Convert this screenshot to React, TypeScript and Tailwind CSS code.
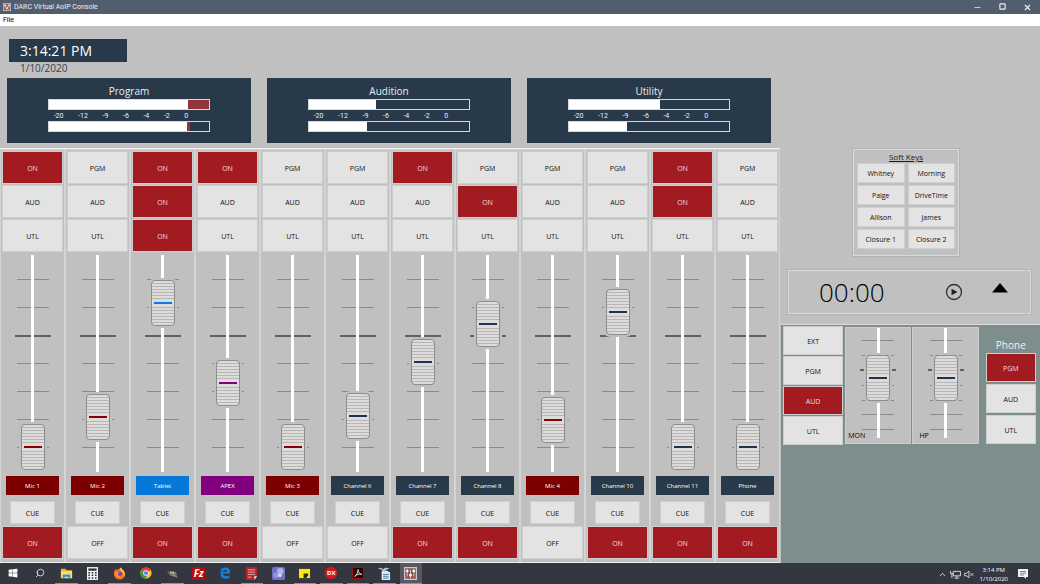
import { useState } from "react";
import type { ReactNode } from "react";
import clsx from "clsx";
import { FaWindows } from "react-icons/fa";
import { ChevronUp, Minus, Search, Square, X } from "lucide-react";

type Bus = "PGM" | "AUD" | "UTL";

interface ChannelConfig {
  name: string;
  kind: "mic" | "tablet" | "apex" | "line";
  buses: Bus[];
  level: number;
  on: boolean;
}

const BUSES: Bus[] = ["PGM", "AUD", "UTL"];

const CHANNELS: ChannelConfig[] = [
  { name: "Mic 1", kind: "mic", buses: ["PGM"], level: 0, on: true },
  { name: "Mic 2", kind: "mic", buses: [], level: 30, on: false },
  { name: "Tablet", kind: "tablet", buses: ["PGM", "AUD", "UTL"], level: 144, on: true },
  { name: "APEX", kind: "apex", buses: ["PGM"], level: 64, on: true },
  { name: "Mic 3", kind: "mic", buses: [], level: 0, on: false },
  { name: "Channel 6", kind: "line", buses: [], level: 31, on: false },
  { name: "Channel 7", kind: "line", buses: ["PGM"], level: 85, on: true },
  { name: "Channel 8", kind: "line", buses: ["AUD"], level: 123, on: true },
  { name: "Mic 4", kind: "mic", buses: [], level: 27, on: false },
  { name: "Channel 10", kind: "line", buses: [], level: 135, on: true },
  { name: "Channel 11", kind: "line", buses: ["PGM", "AUD"], level: 0, on: true },
  { name: "Phone", kind: "line", buses: [], level: 0, on: true },
];

const METERS = [
  { name: "Program", levels: [{ white: 87, red: 13 }, { white: 86, red: 2 }] },
  { name: "Audition", levels: [{ white: 42, red: 0 }, { white: 36, red: 0 }] },
  { name: "Utility", levels: [{ white: 57, red: 0 }, { white: 36, red: 0 }] },
];

const SOFT_KEYS = ["Whitney", "Morning", "Paige", "DriveTime", "Allison", "James", "Closure 1", "Closure 2"];

const labelColor = {
  mic: "bg-[#7d0000]",
  tablet: "bg-[#0578d8]",
  apex: "bg-[#800080]",
  line: "bg-[#28394a]",
};

const capColor = {
  mic: "[--cap:#8b0000]",
  tablet: "[--cap:#0a78e6]",
  apex: "[--cap:#800080]",
  line: "[--cap:#1f3350]",
};

function Key({ on, className, children, onClick }: { on?: boolean; className?: string; children: ReactNode; onClick?: () => void }) {
  return (
    <button
      type="button"
      onClick={onClick}
      className={clsx(
        "flex items-center justify-center pt-px font-medium outline outline-[#cecece]",
        on ? "bg-[#a21b21] text-[#f4dede]" : "bg-[#e3e3e3] text-[#111111]",
        className
      )}
    >
      {children}
    </button>
  );
}

function Fader({ name, value, max, cap, small }: { name: string; value: number; max: number; cap: string; small?: boolean }) {
  const [level, setLevel] = useState(value);

  return (
    <div className={clsx("grid w-full justify-items-center", small ? "h-[110px]" : "h-[217px]")}>
      <div className={clsx("flex h-full w-9 flex-col items-center justify-between [grid-area:1/1]", small ? "pt-3 pb-2" : "py-6")}>
        {[0, 1, 2, 3, 4, 5, 6].map((i) => (
          <span key={i} className={i === 2 ? "h-[2px] w-9 bg-[#636363]" : "h-px w-8 bg-[#8a8a8a]"} />
        ))}
      </div>
      <div className="h-full w-[3px] bg-white [grid-area:1/1]" />
      <input
        type="range"
        aria-label={name}
        min={0}
        max={max}
        value={level}
        onChange={(e) => setLevel(Number(e.target.value))}
        className={clsx(
          cap,
          small ? "h-full" : "h-[215px]",
          "w-6 appearance-none bg-transparent [grid-area:1/1] [writing-mode:vertical-lr] [direction:rtl]",
          "[&::-webkit-slider-thumb]:h-[46px] [&::-webkit-slider-thumb]:w-6 [&::-webkit-slider-thumb]:appearance-none",
          "[&::-webkit-slider-thumb]:rounded-[4px] [&::-webkit-slider-thumb]:border [&::-webkit-slider-thumb]:border-[#8e8e8e]",
          "[&::-webkit-slider-thumb]:shadow-[0_0_0_2px_#bfbfbf]",
          "[&::-webkit-slider-thumb]:[background:linear-gradient(var(--cap),var(--cap))_center/18px_2px_no-repeat,linear-gradient(#dcdcdc,#dcdcdc)_center/100%_6px_no-repeat,repeating-linear-gradient(#dedcda_0_2px,#b8b6b4_2px_3px)]"
        )}
      />
    </div>
  );
}

function Channel({ config }: { config: ChannelConfig }) {
  const [buses, setBuses] = useState(config.buses);
  const [on, setOn] = useState(config.on);

  const toggleBus = (bus: Bus) => {
    setBuses(buses.includes(bus) ? buses.filter((b) => b !== bus) : [...buses, bus]);
  };

  return (
    <div className="flex flex-col border-x border-t border-[#d4d4d4] px-[2px] pt-[2px] pb-[4px]">
      <div className="flex flex-col gap-[3px]">
        {BUSES.map((bus) => (
          <Key key={bus} on={buses.includes(bus)} onClick={() => toggleBus(bus)} className="h-[31px]">
            {buses.includes(bus) ? "ON" : bus}
          </Key>
        ))}
      </div>
      <div className="mt-1">
        <Fader name={config.name + " level"} value={config.level} max={169} cap={capColor[config.kind]} />
      </div>
      <div className={clsx("mx-[3px] mt-1 flex h-[19px] items-center justify-center text-[6px] text-white", labelColor[config.kind])}>
        {config.name}
      </div>
      <Key className="mx-2 mt-[7px] h-[21px]">CUE</Key>
      <Key on={on} onClick={() => setOn(!on)} className="mt-1 h-[31px]">
        {on ? "ON" : "OFF"}
      </Key>
    </div>
  );
}

function MeterBar({ name, white, red }: { name: string; white: number; red: number }) {
  return (
    <div role="meter" aria-label={name} aria-valuenow={white + red} className="flex h-[11px] border border-[#d5d9dc]">
      <div className="bg-white" style={{ width: white + "%" }} />
      <div className="bg-[#91343b]" style={{ width: red + "%" }} />
    </div>
  );
}

function MeterPanel({ name, levels }: { name: string; levels: { white: number; red: number }[] }) {
  return (
    <section className="h-[65px] bg-[#28394a] pt-[5px] text-[#eceff1]">
      <h2 className="text-center text-[10px] leading-4">{name}</h2>
      <div className="mx-auto w-2/3">
        <MeterBar name={name + " left"} {...levels[0]} />
        <div className="flex h-[11px] items-center justify-between pt-px pr-[22px] pl-[6px] font-[Roboto,sans-serif] text-[7px]">
          {["-20", "-12", "-9", "-6", "-4", "-2", "0"].map((db) => (
            <span key={db}>{db}</span>
          ))}
        </div>
        <MeterBar name={name + " right"} {...levels[1]} />
      </div>
    </section>
  );
}

function ConsoleIcon({ className }: { className?: string }) {
  return (
    <svg viewBox="0 0 16 16" className={className}>
      <rect width="16" height="16" fill="#d9c4c4" />
      <rect x="1.500" y="1.500" width="13" height="13" fill="#7d5656" />
      <path d="M4 2v12M8 2v12M12 2v12" stroke="#e8e0e0" strokeWidth="1" />
      <path d="M2.500 5h3M6.500 10h3M10.500 5h3" stroke="#fff" strokeWidth="2.600" />
      <path d="M2.500 12.500h3M10.500 12.500h3M6.500 3h3" stroke="#d04545" strokeWidth="2" />
    </svg>
  );
}

const apps: { name: string; open?: boolean; icon: ReactNode }[] = [
  { name: "Start", icon: <FaWindows className="size-[10px] text-white" /> },
  { name: "Search", icon: <Search className="size-[10px] -scale-x-100 text-[#e6e6e6]" strokeWidth={2} /> },
  {
    name: "Explorer",
    open: true,
    icon: (
      <svg viewBox="0 0 14 14" className="size-[13px]">
        <path d="M1 2h5l1 1.5h6V12H1z" fill="#f0b429" />
        <path d="M1 4.5h12V12H1z" fill="#fbdc78" />
        <path d="M3 8h8v4.5H9.2v-2H4.8v2H3z" fill="#2f8fd8" />
      </svg>
    ),
  },
  {
    name: "Calculator",
    icon: (
      <svg viewBox="0 0 12 14" className="h-[13px] w-[11px]">
        <rect width="12" height="14" fill="#f5f5f5" />
        <rect x="1.5" y="1.5" width="9" height="2.5" fill="#30333b" />
        <path d="M1.5 6.2h9M1.5 9h9M1.5 11.8h9" stroke="#30333b" strokeWidth="1.6" strokeDasharray="1.8 1.8" />
      </svg>
    ),
  },
  {
    name: "Firefox",
    open: true,
    icon: (
      <svg viewBox="0 0 16 16" className="size-[13px]">
        <path d="M2 4 3.5 2l1 1.8C6 2 8 3 9 .5c2 1.3 2.5 3 4 4 3.500 4 1 11-5 11S-.5 9 2 4z" fill="#ff6a2b" />
        <path d="M9 .5c2 1.300 2.500 3 4 4 2 2.500 2 6 .5 8C14 8 11 5 9 4z" fill="#ffd43b" />
        <circle cx="7.800" cy="8.800" r="3.400" fill="#7542c9" />
        <path d="M3 7c2-1.500 4-.5 5 .5-1.500 0-2.500 1-2 2.200 1 1.500 3.500 1.300 5 0-.5 3-6 4-8 .3z" fill="#ff9a28" />
      </svg>
    ),
  },
  {
    name: "Chrome",
    icon: (
      <svg viewBox="0 0 16 16" className="size-[12px]">
        <circle cx="8" cy="8" r="7.500" fill="#fbc116" />
        <path d="M8 8 1.500 4.300A7.500 7.500 0 0 1 14.500 4.300z" fill="#e33b2e" />
        <path d="M8 8 1.500 4.300A7.500 7.500 0 0 0 7.500 15.500l3.200-6z" fill="#2ba24c" />
        <circle cx="8" cy="8" r="3.700" fill="#fff" />
        <circle cx="8" cy="8" r="2.800" fill="#4285f4" />
      </svg>
    ),
  },
  {
    name: "GIMP",
    open: true,
    icon: (
      <svg viewBox="0 0 16 12" className="h-[9px] w-[12px]">
        <path d="M1 2l4 2 3-1 5 1 2 4-4 2-5-1-3-3z" fill="#80776b" />
        <circle cx="6" cy="4.500" r="1.200" fill="#ccc" />
        <circle cx="9.500" cy="5" r="1.200" fill="#ddd" />
        <path d="M9 8l6 3" stroke="#d08132" strokeWidth="1.500" />
        <path d="M1 2l5 5" stroke="#37312b" strokeWidth="1" />
      </svg>
    ),
  },
  {
    name: "FileZilla",
    icon: <span className="flex size-[13px] items-center justify-center bg-[#b50d0d] text-[10px] font-bold text-white italic">Fz</span>,
  },
  {
    name: "Edge",
    icon: (
      <svg viewBox="0 0 16 16" className="size-[12px]">
        <path d="M1 7C2 2.500 5 .7 8.300.7c4.500 0 6.900 3 6.700 8.100H5.300c.2 3.800 5.200 4.400 8.600 2.500v3.100C8.500 17 2 14.900 2 9.500c0-2 1.200-3.700 3.400-4.700C3.500 5 2 6 1 7zm4.500-.7h5.300C10.600 3 6 3 5.500 6.300z" fill="#1282dd" />
      </svg>
    ),
  },
  {
    name: "Log",
    open: true,
    icon: (
      <svg viewBox="0 0 14 14" className="size-[13px]">
        <path d="M1 0h12v10l-3 4H1z" fill="#b3222c" />
        <path d="M3 3h8M3 5.500h8M3 8h8M3 11h4" stroke="#e8b3b5" strokeWidth="1" />
        <path d="M13 10h-3v4z" fill="#eee" />
      </svg>
    ),
  },
  {
    name: "Audio",
    icon: (
      <svg viewBox="0 0 14 14" className="size-[13px]">
        <rect width="14" height="14" rx="2" fill="#6f70c9" />
        <circle cx="9" cy="4.500" r="3.500" fill="#aeb4ec" />
        <circle cx="4.500" cy="9" r="3" fill="#9298dc" />
        <circle cx="8.500" cy="9" r="2" fill="#d9dcfa" />
      </svg>
    ),
  },
  {
    name: "Notes",
    open: true,
    icon: (
      <svg viewBox="0 0 12 12" className="size-[11px]">
        <path d="M0 1h12v10H0z" fill="#fce903" />
        <path d="M5 11V6h5v2L8 11z" fill="#2c2d31" />
      </svg>
    ),
  },
  {
    name: "DX",
    open: true,
    icon: <span className="flex size-[12px] items-center justify-center rounded-full bg-[#e2131c] text-[6px] font-bold text-white">DX</span>,
  },
  {
    name: "Acrobat",
    open: true,
    icon: (
      <svg viewBox="0 0 14 14" className="size-[12px]">
        <rect x=".5" y=".5" width="13" height="13" fill="#2a0504" stroke="#a01612" />
        <path d="M3 11c2-1 4-4 4-8 .5 4 2 5.500 4.500 5.500-3-.7-6 .3-8.500 2.500z" fill="none" stroke="#f0e8e8" strokeWidth="1" />
      </svg>
    ),
  },
  {
    name: "Writer",
    open: true,
    icon: (
      <svg viewBox="0 0 14 14" className="size-[13px]">
        <path d="M4 4h6l3 2v8H4z" fill="#e4eef4" />
        <path d="M5.500 8h6M5.500 10h6M5.500 12h6" stroke="#3f7796" strokeWidth="1" />
        <path d="M0 1.500c2-1.500 4-.5 5.500 1C8 .5 10 .5 12.500 2 9.500 2 8 3.500 7 6 5.500 3.500 3 2 0 1.500z" fill="#a9c9d8" />
      </svg>
    ),
  },
  { name: "DARC", open: true, icon: <ConsoleIcon className="size-[13px]" /> },
];

export default function App() {
  const [monitor, setMonitor] = useState("AUD");
  const [phone, setPhone] = useState<Bus>("PGM");

  return (
    <div className="flex min-h-screen flex-col bg-[#c0c0c0] font-['Open_Sans','Noto_Sans',sans-serif] text-[7px] leading-none">
      <header className="flex h-[14px] items-center justify-between bg-[#525e6e] text-[#eef0f2]">
        <div className="flex items-center gap-[3px] pl-[3px]">
          <ConsoleIcon className="size-2" />
          <h1 className="font-[Roboto,sans-serif] text-[7px]">DARC Virtual AoIP Console</h1>
        </div>
        <div className="flex">
          <button type="button" aria-label="Minimize" className="flex w-[25px] justify-center"><Minus className="size-[9px]" /></button>
          <button type="button" aria-label="Maximize" className="flex w-[25px] justify-center"><Square className="size-[7px]" strokeWidth={4} /></button>
          <button type="button" aria-label="Close" className="flex w-[25px] justify-center"><X className="size-[9px]" strokeWidth={3} /></button>
        </div>
      </header>
      <nav className="flex h-3 items-center bg-white pl-[3px]">
        <button type="button" className="font-[Roboto,sans-serif] text-[7px] text-black">File</button>
      </nav>

      <main className="flex flex-1">
        <div className="flex flex-[3] flex-col">
          <div className="h-[52px] pt-[13px] pl-[9px]">
            <div className="flex h-[23px] w-[118px] items-center bg-[#28394a] pt-px pl-[11px] text-[14px] text-white">3:14:21 PM</div>
            <div className="pt-px pl-[11px] text-[10px] text-[#34404e]">1/10/2020</div>
          </div>

          <div className="grid grid-cols-3 gap-4 pr-[9px] pl-[7px]">
            {METERS.map((m) => (
              <MeterPanel key={m.name} {...m} />
            ))}
          </div>

          <div className="mt-[5px] grid flex-1 grid-cols-3 border-y border-[#f0f0f0]">
            {[0, 4, 8].map((start) => (
              <div key={start} className="grid grid-cols-4">
                {CHANNELS.slice(start, start + 4).map((c) => (
                  <Channel key={c.name} config={c} />
                ))}
              </div>
            ))}
          </div>
        </div>

        <aside className="flex flex-1 flex-col">
          <section className="mt-[123px] mr-[81px] ml-[73px] border border-[#dadada] px-1 pt-px pb-[7px] outline outline-[#b3b3b3]">
            <h2 className="text-center text-[8px] leading-3 text-[#1c1c1c] underline">Soft Keys</h2>
            <div className="mt-px grid grid-cols-2 gap-x-[5px] gap-y-[4px]">
              {SOFT_KEYS.map((k) => (
                <Key key={k} className="h-[18px]">{k}</Key>
              ))}
            </div>
          </section>

          <section className="mt-[14px] mr-[9px] ml-2 flex h-[44px] items-center border border-[#dadada] pl-[30px] outline outline-[#b3b3b3]">
            <time className="flex-1 text-[26px] font-light text-black">00:00</time>
            <button type="button" aria-label="Start timer">
              <svg viewBox="0 0 18 18" className="size-[18px]">
                <circle cx="9" cy="9" r="7.500" fill="none" stroke="#333" strokeWidth="1.300" />
                <path d="M6.500 5.800v6.400L12.500 9z" fill="#222" />
              </svg>
            </button>
            <button type="button" aria-label="Count up" className="mr-[21px] mb-2 ml-7">
              <svg viewBox="0 0 18 10" className="h-[10px] w-[18px]">
                <path d="M9 0l8 9.500H1z" fill="#000" />
              </svg>
            </button>
          </section>

          <section className="mt-[10px] ml-px flex flex-1 items-start border-t border-[#dcdcdc] bg-[#7e8e8d] pt-[2px] pr-[5px] pl-[3px]">
            <div className="flex flex-[59] flex-col gap-[3px]">
              {["EXT", "PGM", "AUD", "UTL"].map((s) => (
                <Key key={s} on={monitor === s} onClick={() => setMonitor(s)} className="h-[27px]">{s}</Key>
              ))}
            </div>
            {["MON", "HP"].map((name, i) => (
              <div
                key={name}
                className={clsx("relative h-[117px] flex-[65] border border-[#cccccc] bg-[#c0c0c0]", i === 0 ? "ml-[3px]" : "ml-px")}
              >
                <Fader name={name} value={37} max={64} cap={capColor.line} small />
                <span className={clsx("absolute bottom-1 font-medium text-black", i === 0 ? "left-[2px]" : "left-[6px]")}>{name}</span>
              </div>
            ))}
            <div className="ml-2 flex flex-[49] flex-col gap-1">
              <h2 className="flex h-[23px] items-end justify-center text-[10px] text-[#eef2f2]">Phone</h2>
              {BUSES.map((b) => (
                <Key key={b} on={phone === b} onClick={() => setPhone(b)} className="h-[27px]">{b}</Key>
              ))}
            </div>
          </section>
        </aside>
      </main>

      <footer className="flex h-[22px] items-stretch justify-between bg-[#343740] text-white">
        <div className="grid w-[424px] grid-cols-16">
          {apps.map((a) => (
            <button
              key={a.name}
              type="button"
              aria-label={a.name}
              className={clsx(
                "mx-[2px] flex items-center justify-center border-b-2",
                a.open ? "border-[#8493a8]" : "border-transparent",
                a.name === "DARC" && "bg-[#555962]"
              )}
            >
              {a.icon}
            </button>
          ))}
        </div>
        <div className="flex items-center gap-[3px]">
          <ChevronUp className="size-[9px]" />
          <svg viewBox="0 0 12 10" className="h-[9px] w-[11px]" fill="none" stroke="#e8e8e8">
            <path d="M3.500 1.500h8v5h-8zM7.500 6.500v2.500M5 9h5M.5 1v3h3M2 4v5" />
          </svg>
          <svg viewBox="0 0 12 10" className="h-[9px] w-[10px]" fill="none" stroke="#e8e8e8">
            <path d="M.5 3.500H3L6 1v8L3 6.500H.5zM8 3.500l3 3M11 3.500l-3 3" />
          </svg>
          <div className="ml-[3px] flex flex-col items-center gap-[3px] text-[6px]">
            <span>3:14 PM</span>
            <span>1/10/2020</span>
          </div>
          <svg viewBox="0 0 10 10" className="mr-3 ml-[7px] size-[10px]">
            <path d="M0 0h10v8H8v2L6 8H0z" fill="#f2f2f2" />
            <path d="M2 2.500h6M2 4.200h6M2 6h4" stroke="#52565e" strokeWidth=".7" />
          </svg>
        </div>
      </footer>
    </div>
  );
}
